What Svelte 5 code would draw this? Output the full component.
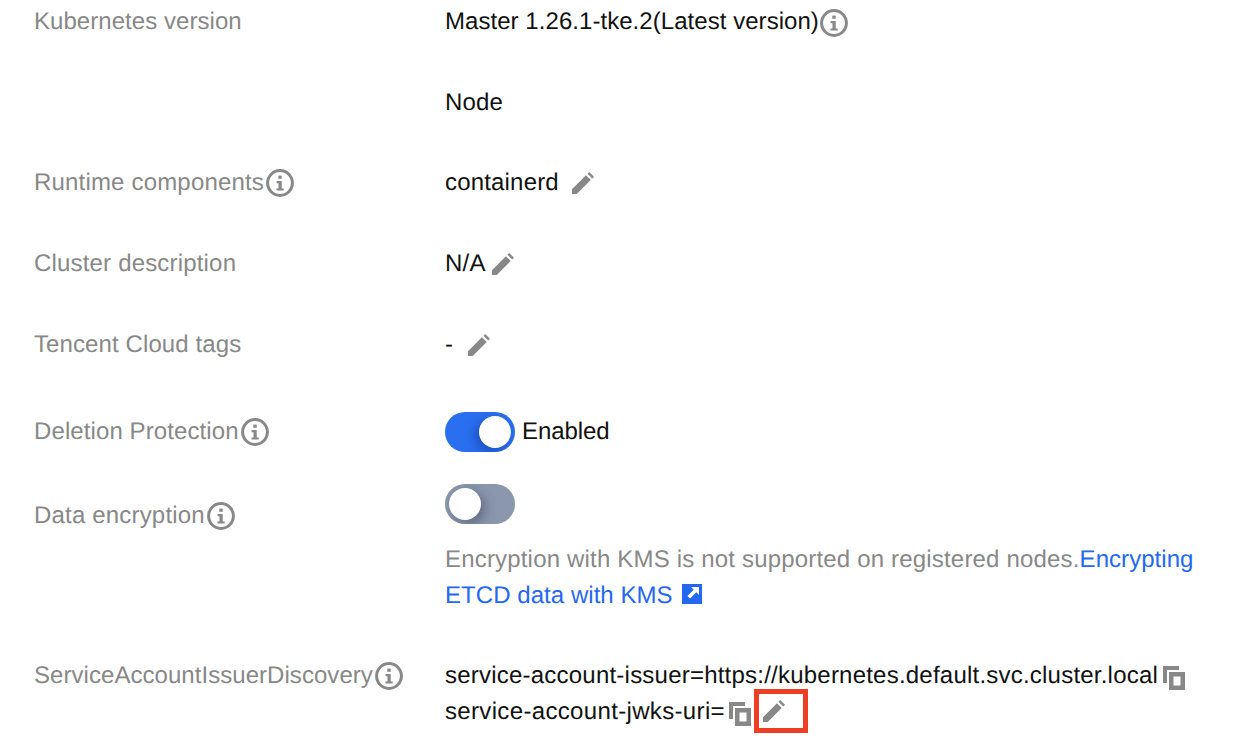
<script>
  const blue = '#2468f2';
</script>

{#snippet info(cls = '')}
  <svg class="info {cls}" viewBox="0 0 28 28" aria-hidden="true">
    <circle cx="14" cy="14" r="12.4" fill="none" stroke="#888" stroke-width="3" />
    <rect x="12.3" y="6.6" width="3.4" height="3.2" fill="#888" />
    <path d="M10.600 12h5.100v7.400h2v2.200h-7.200v-2.200h2v-5.200h-1.900z" fill="#888" />
  </svg>
{/snippet}

{#snippet pencil()}
  <svg class="pencil" viewBox="0 0 24 24" aria-hidden="true">
    <path d="M1 23v-5L15.600 3.400l5 5L6 23zM17.200 1.800 19 0l5 5-1.800 1.800z" fill="#888" />
  </svg>
{/snippet}

{#snippet copy()}
  <svg class="copy" viewBox="0 0 22 24" aria-hidden="true">
    <path d="M0 0h16v4H4v13H0z" fill="#888" />
    <path fill-rule="evenodd" d="M6 6h16v18H6zM10.500 10.500v9h7v-9z" fill="#888" />
  </svg>
{/snippet}

<main class="page">
  <div class="row">
    <div class="label ls1">Kubernetes version</div>
    <div class="value ls1">Master 1.26.1-tke.2(Latest version){@render info('lift')}</div>
  </div>
  <div class="row r2">
    <div class="label"></div>
    <div class="value ls3">Node</div>
  </div>
  <div class="row r3">
    <div class="label ls3">Runtime components{@render info()}</div>
    <div class="value ls3">containerd <span class="sp5"></span>{@render pencil()}</div>
  </div>
  <div class="row r2">
    <div class="label ls3">Cluster description</div>
    <div class="value ls4">N/A<span class="sp5"></span>{@render pencil()}</div>
  </div>
  <div class="row r2">
    <div class="label ls2">Tencent Cloud tags</div>
    <div class="value ls3">- <span class="sp7"></span>{@render pencil()}</div>
  </div>
  <div class="row r6">
    <div class="label ls2">Deletion Protection{@render info()}</div>
    <div class="value">
      <span class="switch on"><span class="knob"></span></span>
      <span class="sw-text">Enabled</span>
    </div>
  </div>
  <div class="row r7">
    <div class="label offset ls3">Data encryption{@render info()}</div>
    <div class="stack">
      <span class="switch off"><span class="knob"></span></span>
      <p class="help"><span class="ls3">Encryption with KMS is not supported on registered nodes.</span><a class="ls1" href="#kms" style:color={blue}>Encrypting ETCD data with KMS</a><svg class="ext" viewBox="0 0 20 20" aria-hidden="true">
          <rect width="20" height="20" fill={blue} />
          <path d="M9 3h8v8l-2.700-2.700-6.300 6.300-2.600-2.600 6.300-6.300z" fill="#fff" />
        </svg>
      </p>
    </div>
  </div>
  <div class="row r8">
    <div class="label ls1">ServiceAccountIssuerDiscovery{@render info()}</div>
    <div class="lines">
      <div class="line ls4">service-account-issuer=https://kubernetes.default.svc.cluster.local<span class="sp5"></span>{@render copy()}</div>
      <div class="line ls5">service-account-jwks-uri=<span class="sp4"></span>{@render copy()}<span class="mark">{@render pencil()}</span></div>
    </div>
  </div>
</main>

<style>
  :global(body) {
    margin: 0;
    background: #fff;
  }
  .page {
    width: 1240px;
    height: 752px;
    overflow: hidden;
    box-sizing: border-box;
    padding: 4px 0 0 34px;
    font-family: "Liberation Sans", Arial, sans-serif;
    font-size: 24px;
    line-height: 36px;
    color: #111;
    text-rendering: geometricPrecision;
  }
  .ls1 { letter-spacing: 0.05px; }
  .ls2 { letter-spacing: 0.1px; }
  .ls3 { letter-spacing: 0.18px; }
  .ls4 { letter-spacing: 0.22px; }
  .ls5 { letter-spacing: 0.34px; }
  .row {
    display: grid;
    grid-template-columns: 411px 1fr;
  }
  .r2 { margin-top: 45px; }
  .r3 { margin-top: 44px; }
  .r6 { margin-top: 49px; align-items: center; }
  .r7 { margin-top: 32px; }
  .r8 { margin-top: 44px; }
  .label {
    display: flex;
    align-items: center;
    height: 36px;
    color: #888;
  }
  .offset { margin-top: 14px; }
  .value, .line {
    display: flex;
    align-items: center;
    min-height: 36px;
    white-space: pre;
  }
  .stack {
    display: flex;
    flex-direction: column;
    align-items: flex-start;
  }
  .info {
    width: 28px;
    height: 28px;
    flex: none;
    margin-left: 2px;
  }
  .lift {
    margin-top: 2px;
    margin-left: 1px;
  }
  .pencil {
    width: 23px;
    height: 23px;
    flex: none;
  }
  .copy {
    width: 22px;
    height: 24px;
    flex: none;
    margin-top: 3px;
  }
  .sp4 { width: 4px; }
  .sp5 { width: 5px; }
  .sp7 { width: 7px; }
  .switch {
    position: relative;
    display: block;
    width: 70px;
    height: 40px;
    border-radius: 20px;
    overflow: hidden;
    flex: none;
  }
  .switch.on { background: #2a6ff0; }
  .switch.off { background: #8a97ac; }
  .knob {
    position: absolute;
    top: 4px;
    width: 32px;
    height: 32px;
    border-radius: 50%;
    background: #fff;
  }
  .on .knob {
    right: 4px;
    box-shadow: -4px 4px 12px rgba(0, 30, 110, 0.4);
  }
  .off .knob {
    left: 4px;
    box-shadow: 4px 4px 12px rgba(30, 40, 60, 0.4);
  }
  .sw-text {
    margin-left: 7px;
    letter-spacing: -0.1px;
  }
  .help {
    margin: 18px 0 0;
    width: 770px;
    color: #888;
  }
  .help a { text-decoration: none; }
  .ext {
    width: 20px;
    height: 20px;
    margin-left: 9px;
    vertical-align: -1px;
  }
  .mark {
    display: flex;
    align-items: center;
    box-sizing: border-box;
    width: 54px;
    height: 44px;
    margin: -5px 0 -3px 3px;
    padding-left: 3px;
    border: 5px solid #ee3f25;
  }
</style>
